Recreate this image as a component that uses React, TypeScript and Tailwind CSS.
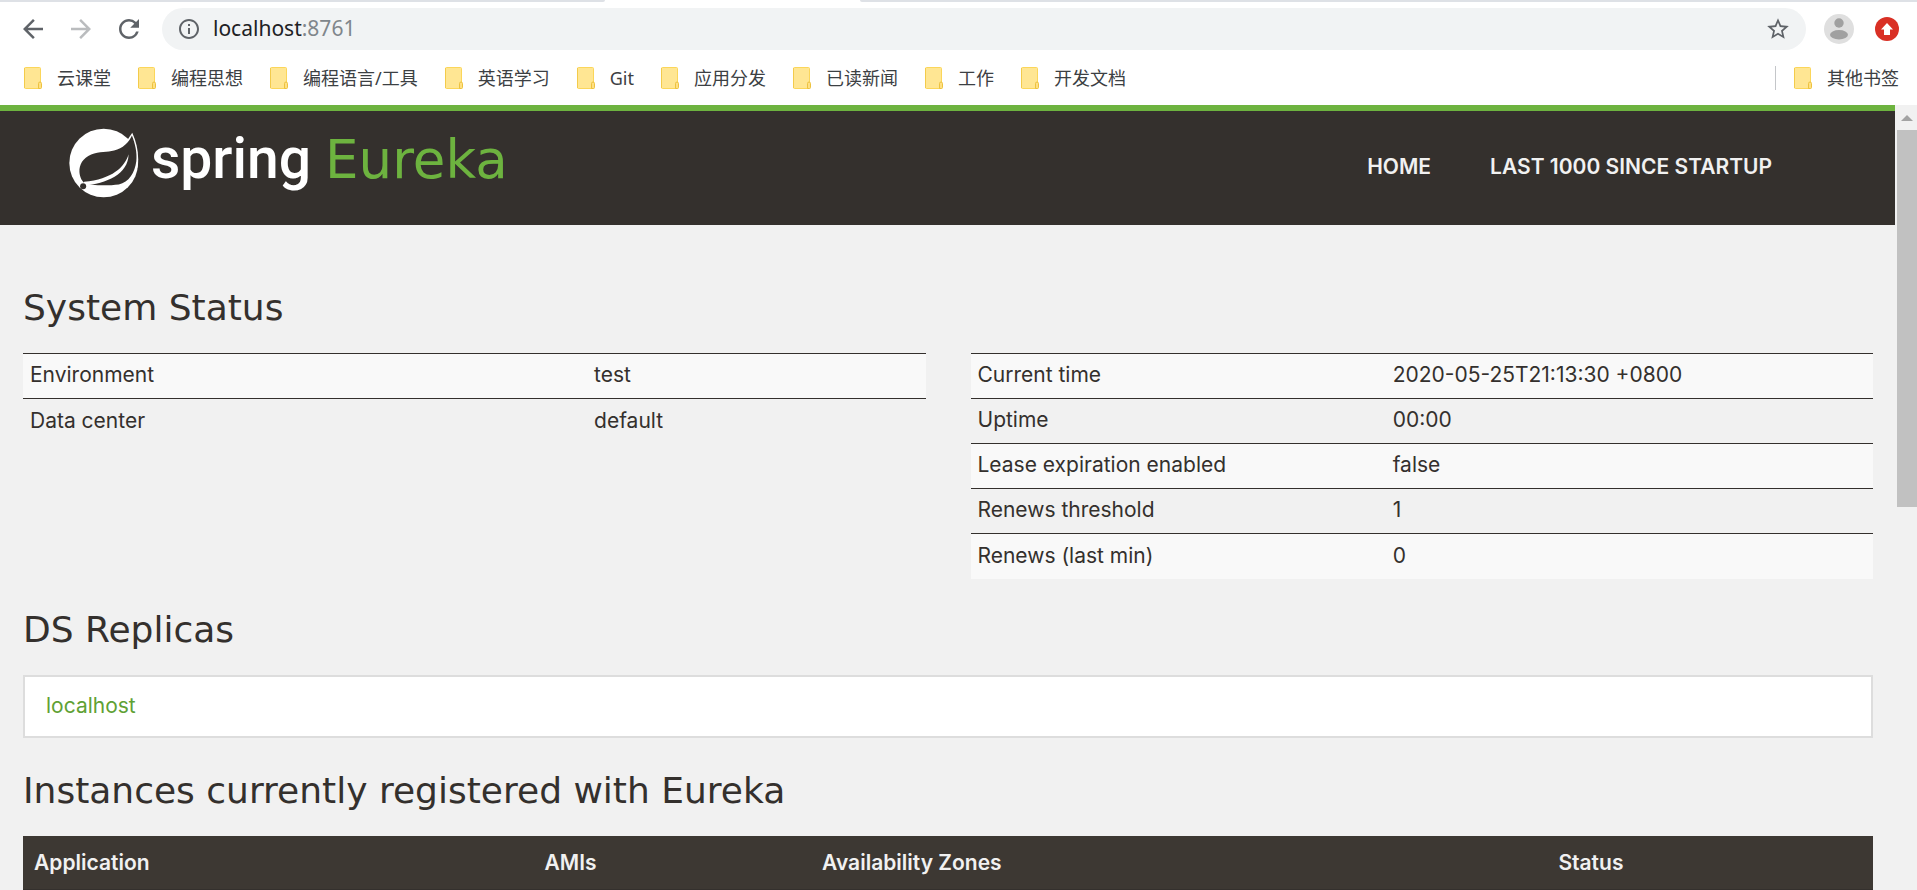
import React from 'react';
import { MdArrowBack, MdArrowForward, MdInfoOutline, MdRefresh, MdStarBorder } from 'react-icons/md';

const BOOKMARKS = ['云课堂', '编程思想', '编程语言/工具', '英语学习', 'Git', '应用分发', '已读新闻', '工作', '开发文档'];

const GENERAL_ROWS = [
  ['Environment', 'test'],
  ['Data center', 'default'],
];

const RUNTIME_ROWS = [
  ['Current time', '2020-05-25T21:13:30 +0800'],
  ['Uptime', '00:00'],
  ['Lease expiration enabled', 'false'],
  ['Renews threshold', '1'],
  ['Renews (last min)', '0'],
];

const FolderIcon = () => (
  <svg width="18" height="22" viewBox="0 0 18 22" className="shrink-0">
    <rect x="0.5" y="0.5" width="16" height="21" rx="1" fill="#ffe693" stroke="#fbd65a" />
    <path d="M0.5 1v20" stroke="#f3cb4b" />
    <path d="M14.5 21.5v-5a1.5 1.5 0 0 1 3 0v4a1 1 0 0 1-1 1z" fill="#ffe083" stroke="#edc23f" />
  </svg>
);

const Bookmark = ({ label }: { label: string }) => (
  <a href="#" className="flex items-center gap-[15px] whitespace-nowrap">
    <FolderIcon />
    {label}
  </a>
);

const SpringLogo = () => (
  <svg width="70" height="70" viewBox="88 84 208 208" className="shrink-0">
    <circle cx="191" cy="188" r="102" fill="#fff" />
    {/* leaf rim, blade and vein */}
    <path d="M276 98C290 128 297 165 292 200L270 250L250 200L258 125Z" fill="#fff" />
    <path
      d="M275 106C266 127 248 144 222 151C203 157 178 153 154 163C129 174 118 193 119 215C120 231 127 244 137 250C152 255 205 256 236 252C266 246 284 216 288 183C291 157 284 128 275 106Z"
      fill="#34302d"
    />
    <path d="M265 162C254 200 216 236 133 244L131 256C200 248 264 222 265 162Z" fill="#fff" />
    <circle cx="130" cy="257" r="9" fill="#34302d" />
  </svg>
);

const StatusTable = ({ rows, labelClass }: { rows: string[][]; labelClass: string }) => (
  <table className="w-full table-fixed self-start border-collapse">
    <tbody>
      {rows.map(([label, value]) => (
        <tr key={label} className="h-[45px] border-t border-[#34302d] odd:bg-[#f9f9f9]">
          <td className={`px-[7px] pb-0.5 ${labelClass}`}>{label}</td>
          <td className="px-[7px] pb-0.5">{value}</td>
        </tr>
      ))}
    </tbody>
  </table>
);

const SectionTitle = ({ children }: { children: React.ReactNode }) => (
  <h1 className="mb-[25px] font-['DejaVu_Sans',sans-serif] text-4xl leading-10">{children}</h1>
);

const BrowserBar = () => (
  <header className="bg-white font-['Noto_Sans','Noto_Sans_CJK_SC',sans-serif]">
    {/* bottom edge of the tab strip */}
    <div className="flex h-0.5">
      <div className="w-[605px] rounded-br-sm bg-[#dee1e6]" />
      <div className="w-[255px]" />
      <div className="flex-1 rounded-bl-sm bg-[#dee1e6]" />
    </div>
    <div className="flex items-center gap-[18px] px-[18px] pt-1.5 text-[#5f6368]">
      <button aria-label="Back"><MdArrowBack size={30} /></button>
      <button aria-label="Forward" className="text-[#babcbe]"><MdArrowForward size={30} /></button>
      <button aria-label="Reload"><MdRefresh size={30} /></button>
      <div className="flex h-[42px] flex-1 items-center rounded-full bg-[#f1f3f4] px-[15px]">
        <MdInfoOutline size={24} />
        <a href="#" className="ml-3 flex-1 text-[21px] text-[#202124]">
          localhost<span className="text-[#80868b]">:8761</span>
        </a>
        <button aria-label="Bookmark this page"><MdStarBorder size={26} /></button>
      </div>
      <div className="flex items-center gap-[21px]">
        <button aria-label="Profile">
          <svg width="30" height="30" viewBox="0 0 30 30">
            <circle cx="15" cy="15" r="15" fill="#dfdfdf" />
            <circle cx="15" cy="9" r="4.7" fill="#a0a0a0" />
            <ellipse cx="15" cy="20.7" rx="9" ry="4.7" fill="#a0a0a0" />
          </svg>
        </button>
        <button aria-label="Update">
          <svg width="24" height="24" viewBox="0 0 24 24">
            <circle cx="12" cy="12" r="12" fill="#d93025" />
            <path d="M12 6l6 6.5h-3V18H9v-5.5H6z" fill="#fff" />
          </svg>
        </button>
      </div>
    </div>
    <nav className="flex h-[55px] items-center gap-[27px] pr-[18px] pl-6 text-lg text-[#3c4043]">
      {BOOKMARKS.map(label => <Bookmark key={label} label={label} />)}
      <div className="ml-auto flex items-center gap-[18px]">
        <div className="h-6 w-px bg-[#c4c6c9]" />
        <Bookmark label="其他书签" />
      </div>
    </nav>
  </header>
);

export default function App() {
  return (
    <div className="flex h-screen flex-col overflow-hidden">
      <BrowserBar />
      <div className="flex min-h-0 flex-1 bg-[#f1f1f1]">
        <div className="flex-1 overflow-hidden font-[Inter,sans-serif] text-[21px] text-[#34302d]">
          <div className="flex h-[120px] items-start justify-between border-t-6 border-[#6db33f] bg-[#34302d] pr-[123px] pl-[69px]">
            <a href="#" className="flex items-start gap-3 pt-[17px]">
              <SpringLogo />
              <span className="flex items-baseline gap-3.5 leading-[62px]">
                <span className="font-[Roboto,sans-serif] text-[57px] font-medium text-white">spring</span>
                <span className="font-['DejaVu_Sans',sans-serif] text-[53px] text-[#6db33f]">Eureka</span>
              </span>
            </a>
            <nav className="flex gap-[59px] pt-[41px] leading-[30px] font-semibold text-[#f1f1f1]">
              <a href="#">HOME</a>
              <a href="#">LAST 1000 SINCE STARTUP</a>
            </nav>
          </div>

          <main className="pt-[63px] pr-[22px] pl-[23px]">
            <SectionTitle>System Status</SectionTitle>
            <div className="grid grid-cols-2 gap-[45px]">
              <StatusTable rows={GENERAL_ROWS} labelClass="w-[62.5%]" />
              <StatusTable rows={RUNTIME_ROWS} labelClass="w-[46%]" />
            </div>

            <div className="pt-[31px]">
              <SectionTitle>DS Replicas</SectionTitle>
              <ul className="border-2 border-[#ddd] bg-white px-[21px] pt-3.5 pb-4 leading-[29px]">
                <li><a href="#" className="text-[#5fa134]">localhost</a></li>
              </ul>
            </div>

            <div className="pt-[33px]">
              <SectionTitle>Instances currently registered with Eureka</SectionTitle>
              <table className="w-full table-fixed border-collapse">
                <thead>
                  <tr className="h-[54px] border-b border-[#34302d] bg-[#3d3833] text-left text-[#f1f1f1]">
                    <th className="w-[27.6%] px-[11px] font-semibold">Application</th>
                    <th className="w-[15%] px-[11px] font-semibold">AMIs</th>
                    <th className="w-[39.8%] px-[11px] font-semibold">Availability Zones</th>
                    <th className="px-[11px] font-semibold">Status</th>
                  </tr>
                </thead>
              </table>
            </div>
          </main>
        </div>

        {/* scrollbar */}
        <div className="flex w-[22px] flex-col items-end">
          <button aria-label="Scroll up" className="flex h-[25px] w-5 items-center justify-center">
            <svg width="12" height="6" viewBox="0 0 12 6"><path d="M6 0l6 6H0z" fill="#a3a3a3" /></svg>
          </button>
          <div className="h-[48%] w-5 bg-[#c1c1c1]" />
        </div>
      </div>
    </div>
  );
}
